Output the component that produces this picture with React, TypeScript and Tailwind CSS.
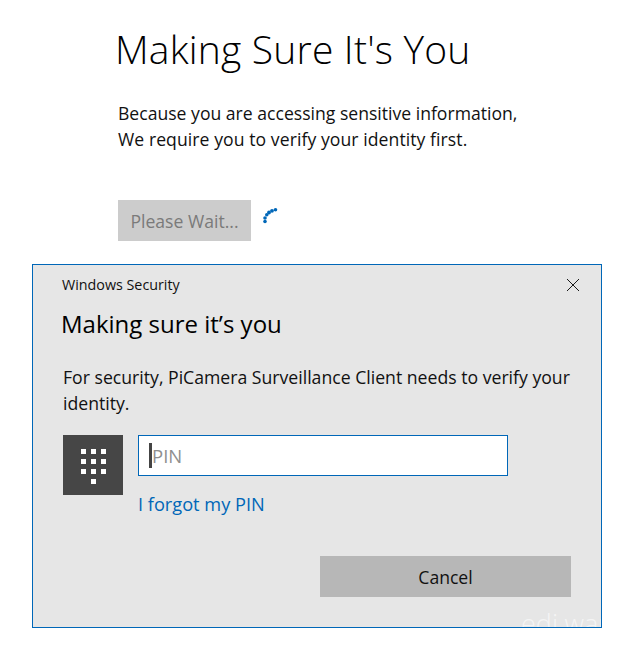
const SEGOE = "font-['Open_Sans','Noto_Sans',sans-serif]";

function Spinner() {
    const dots = [
        [15.5, 1.8, 1.8],
        [12, 2.8, 1.9],
        [9, 4.5, 1.9],
        [6.8, 6.8, 1.8],
        [5, 10, 1.8],
        [5, 13.5, 1.8],
    ];
    return (
        <svg width="20" height="20" viewBox="0 0 20 20" className="ml-[9px] mt-[-5px] shrink-0">
            {dots.map(([cx, cy, r]) => (
                <circle key={cy} cx={cx} cy={cy} r={r} fill="#0067b8" />
            ))}
        </svg>
    );
}

function PinIcon() {
    const keys = [0, 1, 2, 3, 4, 5, 6, 7, 8];
    return (
        <div className="flex h-[60px] w-[60px] shrink-0 items-start justify-center bg-[#464646] pt-[14px]">
            <div className="grid grid-cols-3 gap-[5px]">
                {keys.map((key) => (
                    <span key={key} className="h-[5px] w-[5px] bg-white" />
                ))}
                <span className="col-start-2 h-[5px] w-[5px] bg-white" />
            </div>
        </div>
    );
}

export default function App() {
    return (
        <div className={`${SEGOE} h-[647px] w-[640px] overflow-hidden bg-white`}>
            <div className="pl-[115px] pt-[24px]">
                <h1 className="h-[50px] text-[39px] leading-[50px] font-light tracking-[0.2px] text-black">Making Sure It's You</h1>
                <p className="mt-[26px] pl-[3px] text-[17.6px] leading-[26px] text-[#111111]">
                    Because you are accessing sensitive information,
                    <br />
                    <span className="tracking-[0.07px]">We require you to verify your identity first.</span>
                </p>
                <div className="mt-[48px] flex items-center pl-[3px]">
                    <button type="button" className="h-[41px] w-[133px] bg-[#cccccc] pt-[1px] text-[17.6px] text-[#7a7a7a]">
                        Please Wait...
                    </button>
                    <Spinner />
                </div>
            </div>

            <div className="relative mx-[32px] mt-[23px] h-[364px] w-[570px] overflow-hidden border border-[#0067b8] bg-[#e6e6e6]">
                <div className="flex h-[39px] items-center justify-between pl-[29px] pr-[21px]">
                    <span className="text-[14.3px] text-[#111111]">Windows Security</span>
                    <svg width="14" height="14" viewBox="0 0 14 14" fill="none" stroke="#1a1a1a" strokeWidth="1">
                        <path d="M1 1l12 12M13 1L1 13" />
                    </svg>
                </div>
                <h2 className="mt-[2px] pl-[28px] text-[24px] leading-[36px] font-normal text-black">Making sure it’s you</h2>
                <p className="mt-[22px] w-[545px] pl-[30px] text-[17.65px] leading-[26px] text-[#111111]">
                    For security, PiCamera Surveillance Client needs to verify your identity.
                </p>
                <div className="mt-[19px] flex gap-[15px] pl-[30px]">
                    <PinIcon />
                    <div className="flex flex-col">
                        <div className="flex h-[41px] w-[370px] items-center border border-[#0067b8] bg-white pl-[10px]">
                            <span className="h-[25px] w-[3px] bg-[#444444]" />
                            <span className="pt-[1px] text-[18.5px] text-[#8f8f8f]">PIN</span>
                        </div>
                        <a className="mt-[16px] text-[18.2px] leading-[24px] text-[#0067b8]">I forgot my PIN</a>
                    </div>
                </div>
                <div className="mt-[40px] flex justify-end pr-[30px]">
                    <button type="button" className="h-[41px] w-[251px] bg-[#b7b7b7] pt-[1px] text-[17.6px] text-[#111111]">
                        Cancel
                    </button>
                </div>
                <span className="absolute left-[488px] top-[344px] text-[27px] leading-[30px] font-light whitespace-nowrap text-white/60">
                    edi.wang
                </span>
            </div>
        </div>
    );
}
